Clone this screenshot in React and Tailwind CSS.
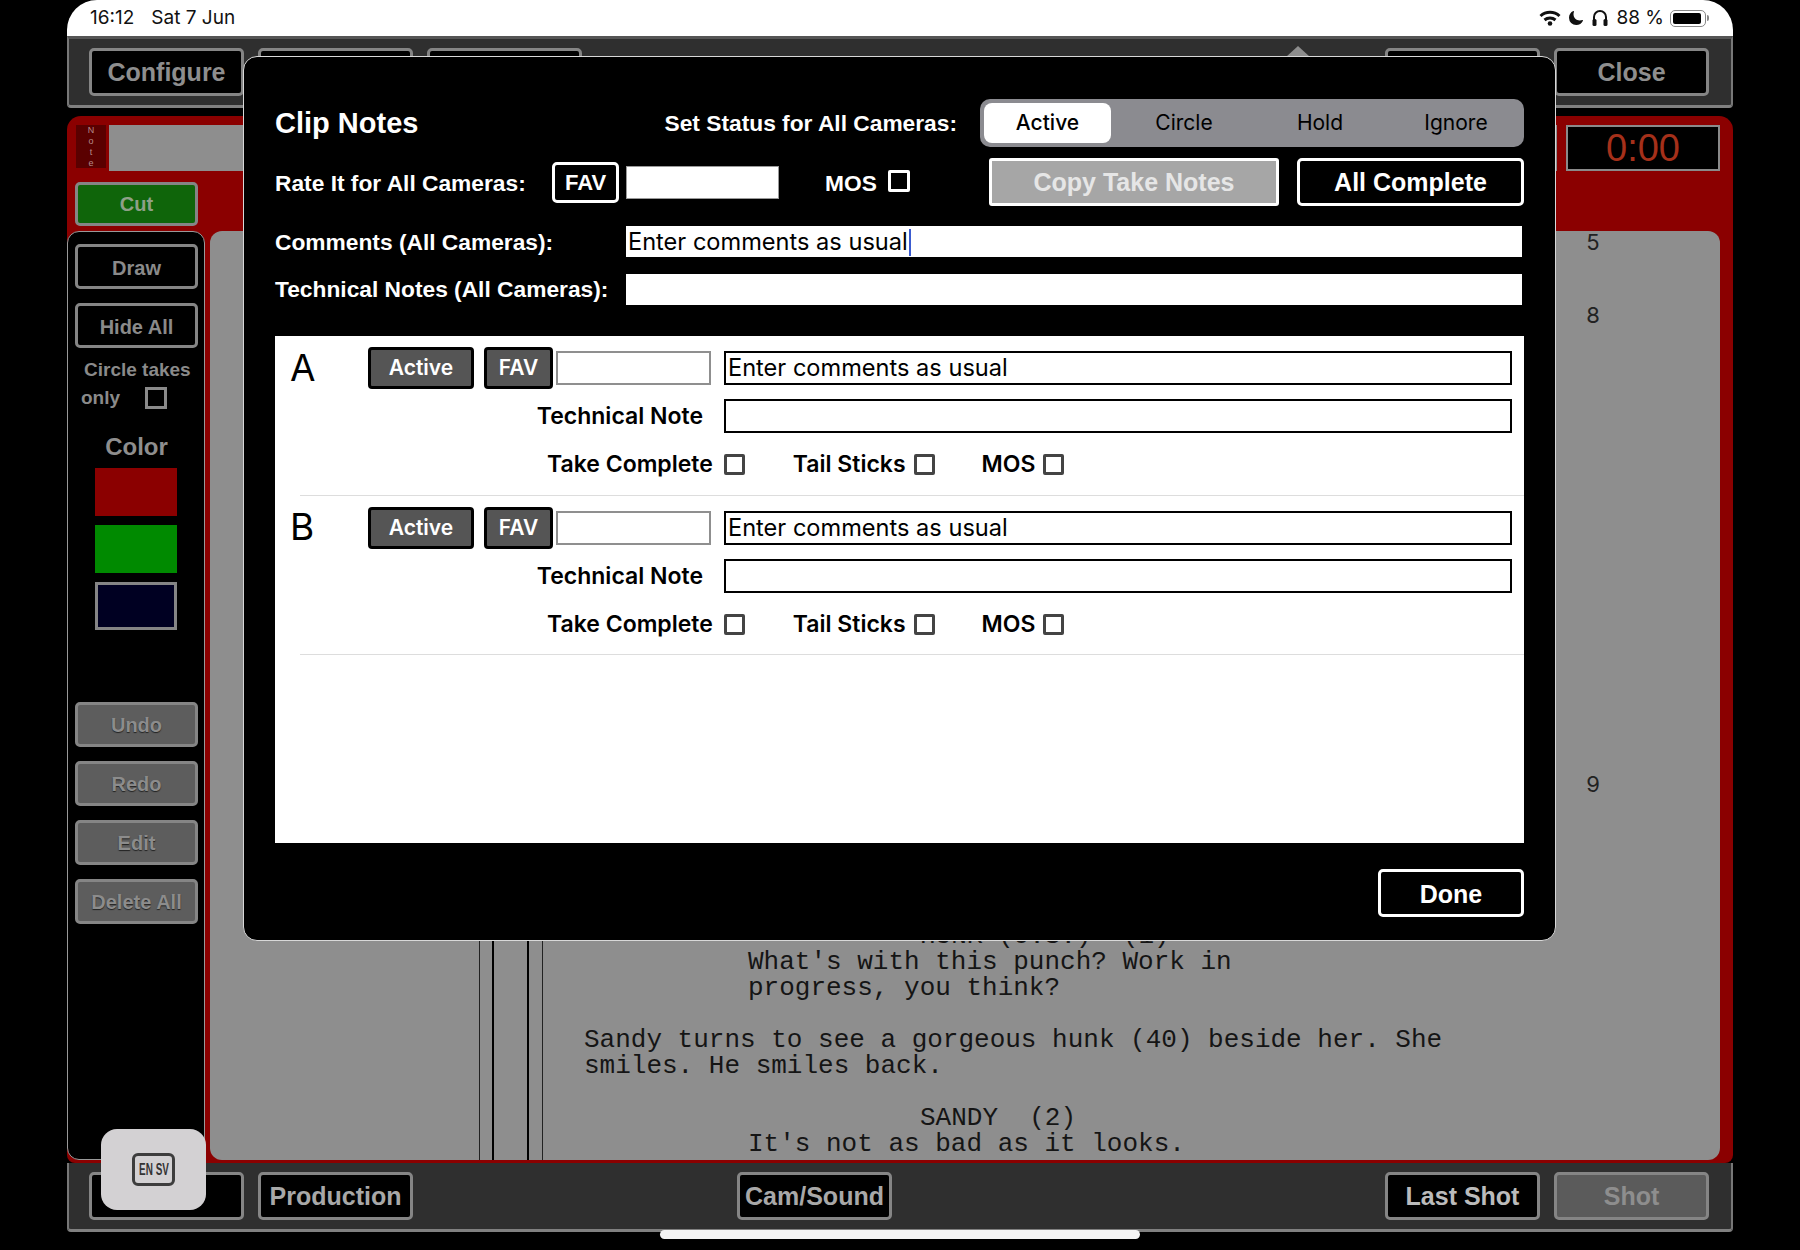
import React from "react";
import { IoMoon } from "react-icons/io5";

const SANS = "font-['Liberation_Sans',Arial,sans-serif]";
const UI = "font-['Inter','Noto_Sans',sans-serif]";

// gray framed buttons of the app behind the dialog
const AppButton = ({ label, className = "" }) => (
  <div className={`flex items-center justify-center h-12 w-[155px] pt-[2px] rounded-[5px] border-[3px] border-[#858585] bg-black text-[25px] font-bold ${SANS} ${className}`}>
    {label}
  </div>
);

const SideButton = ({ label, dim, className = "" }) => (
  <div
    className={`flex items-center justify-center h-[45px] w-[123px] rounded-[5px] border-[3px] border-[#858585] text-[20px] font-bold ${SANS} ${
      dim ? "bg-[#5d5d5d] text-[#8c8c8c] [text-shadow:0_1px_1px_#222]" : "bg-black text-[#8a8a8a]"
    } ${className}`}
  >
    {label}
  </div>
);

const Check = ({ className = "" }) => (
  <div className={`w-[21px] h-[21px] rounded-[2px] border-[3px] border-[#444] bg-white ${className}`} />
);

const DarkButton = ({ label, width }) => (
  <div className={`flex items-center justify-center h-[42px] ${width} rounded-[4px] border-[3px] border-black bg-[#555555] text-white text-[21px] font-semibold ${UI}`}>
    {label}
  </div>
);

const Option = ({ label, boxClass = "" }) => (
  <>
    <span className="text-[23px] font-semibold leading-none text-black">{label}</span>
    <Check className={boxClass} />
  </>
);

const CameraRow = ({ name }) => (
  <div className={`pt-[11px] pb-[19px] ${UI}`}>
    <div className="flex items-center">
      <div className="w-[78px] -mt-[2px] ml-[15px] text-[37px] font-normal leading-none text-black">{name}</div>
      <DarkButton label="Active" width="w-[106px]" />
      <div className="ml-[10px]">
        <DarkButton label="FAV" width="w-[69px]" />
      </div>
      <input readOnly className="ml-[3px] w-[155px] h-[34px] border-2 border-[#8f8f8f] bg-white" />
      <input
        readOnly
        value="Enter comments as usual"
        className="ml-[13px] w-[788px] h-[34px] border-2 border-black bg-white px-[2px] text-[23.6px] text-black outline-none"
      />
    </div>
    <div className="flex items-center mt-[10px]">
      <div className="w-[428px] text-right text-[23px] font-semibold text-black">Technical Note</div>
      <input readOnly className="ml-[21px] w-[788px] h-[34px] border-2 border-black bg-white" />
    </div>
    <div className="flex items-center h-[22px] mt-5 pl-[272px]">
      <Option label="Take Complete" boxClass="ml-[11px]" />
      <div className="w-[48px]" />
      <Option label="Tail Sticks" boxClass="ml-[8px]" />
      <div className="w-[47px]" />
      <Option label="MOS" boxClass="ml-[8px]" />
    </div>
  </div>
);

const ClipNotes = () => (
  <div className={`absolute left-[243px] top-[56px] w-[1313px] h-[885px] rounded-[14px] border border-[#d8d8d8] bg-black pt-[42px] pl-[31px] pr-[31px] text-white ${SANS}`}>
    {/* title and status */}
    <div className="flex items-center justify-between h-12">
      <div className="pt-[1px] text-[29px] font-bold">Clip Notes</div>
      <div className="flex items-center">
        <span className="text-[22.75px] font-bold">Set Status for All Cameras:</span>
        <div className={`ml-[23px] w-[544px] h-12 grid grid-cols-4 items-center rounded-[10px] bg-[#8b8b90] text-[21px] text-black ${UI}`}>
          <div className="ml-1 w-[127px] h-10 flex items-center justify-center rounded-[8px] bg-white font-medium">Active</div>
          <div className="text-center">Circle</div>
          <div className="text-center">Hold</div>
          <div className="text-center">Ignore</div>
        </div>
      </div>
    </div>

    {/* rating row */}
    <div className="flex items-center h-12 mt-[11px]">
      <div className="w-[277px] pt-[2px] text-[22.75px] font-bold">Rate It for All Cameras:</div>
      <div className="flex items-center justify-center w-[67px] h-[41px] pt-[1px] rounded-[5px] border-[3px] border-white text-[22px] font-bold">FAV</div>
      <div className="ml-[7px] w-[153px] h-[33px] bg-white border border-[#999]" />
      <div className="ml-[46px] pt-[2px] text-[22.75px] font-bold">MOS</div>
      <div className="ml-[11px] -mt-[3px] w-[22px] h-[22px] rounded-[2px] border-[3px] border-white" />
      <div className="ml-auto w-[290px] h-12 pt-[2px] flex items-center justify-center rounded-[3px] border-[3px] border-white bg-[#a6a6a6] text-[25px] font-bold text-[#e6e6e6]">
        Copy Take Notes
      </div>
      <div className="ml-[18px] w-[227px] h-12 pt-[1px] flex items-center justify-center rounded-[5px] border-[3px] border-white text-[25px] font-bold">
        All Complete
      </div>
    </div>

    {/* comments for all cameras */}
    <div className="flex items-center mt-5 h-[31px]">
      <div className="w-[351px] pt-[1px] text-[22.75px] font-bold">Comments (All Cameras):</div>
      <div className={`flex-1 mr-[2px] h-[31px] pt-[1px] flex items-center bg-white px-[2px] text-[23.6px] text-black ${UI}`}>
        Enter comments as usual
        <span className="ml-[1px] w-[2px] h-[27px] bg-[#3a5bd0]" />
      </div>
    </div>
    <div className="flex items-center mt-[17px] h-[31px]">
      <div className="w-[351px] text-[22.75px] font-bold">Technical Notes (All Cameras):</div>
      <div className="flex-1 mr-[2px] h-[31px] bg-white" />
    </div>

    {/* per camera list */}
    <div className="mt-[31px] h-[507px] bg-white">
      <CameraRow name="A" />
      <div className="ml-[25px] h-px bg-[#dddddd]" />
      <CameraRow name="B" />
      <div className="ml-[25px] h-px bg-[#dddddd]" />
    </div>

    <div className="flex justify-end mt-[26px]">
      <div className="w-[146px] h-12 pt-[3px] flex items-center justify-center rounded-[5px] border-[3px] border-white text-[25px] font-bold">Done</div>
    </div>
  </div>
);

const SCRIPT_LINES = [
  ["HUNK (O.S.)  (1)", "pl-[336px]"],
  ["What's with this punch? Work in", "pl-[164px]"],
  ["progress, you think?", "pl-[164px]"],
  ["\u00a0", ""],
  ["Sandy turns to see a gorgeous hunk (40) beside her. She", ""],
  ["smiles. He smiles back.", ""],
  ["\u00a0", ""],
  ["SANDY  (2)", "pl-[336px]"],
  ["It's not as bad as it looks.", "pl-[164px]"],
];

const Script = () => (
  <div className="flex-1 flex rounded-[12px] bg-[#8e8e8e]">
    {/* revision lines */}
    <div className="flex ml-[269px] w-[105px] shrink-0">
      <div className="w-px bg-[#222]" />
      <div className="ml-[12px] w-[2px] bg-black" />
      <div className="ml-[33px] w-[2px] bg-black" />
      <div className="ml-[13px] w-px bg-[#222]" />
    </div>
    <div className="pt-[692px] text-[26px] leading-[26px] whitespace-pre text-[#151515] font-['Liberation_Mono','Courier_New',monospace]">
      {SCRIPT_LINES.map(([text, indent], i) => (
        <div key={i} className={indent}>{text}</div>
      ))}
    </div>
    <div className={`ml-auto mr-[120px] -mt-[2px] flex flex-col text-[22px] leading-[26px] text-[#222] ${UI}`}>
      <span>5</span>
      <span className="mt-[47px]">8</span>
      <span className="mt-[443px]">9</span>
    </div>
  </div>
);

const LeftPanel = () => (
  <div className="w-[138px] shrink-0 rounded-[12px] border border-[#999] bg-black pt-3 pl-[7px]">
    <SideButton label="Draw" className="pt-[3px]" />
    <SideButton label="Hide All" className="mt-[14px] pt-[2px]" />
    <div className={`mt-[12px] ml-[9px] text-[19px] font-bold leading-none text-[#8a8a8a] whitespace-nowrap ${SANS}`}>Circle takes</div>
    <div className={`flex items-center mt-[5px] ml-[6px] text-[19px] font-bold text-[#8a8a8a] ${SANS}`}>
      only
      <div className="ml-[25px] w-[22px] h-[22px] border-[3px] border-[#8a8a8a]" />
    </div>
    <div className={`mt-[22px] w-[123px] text-center text-[24px] font-bold leading-none text-[#8e8e8e] ${SANS}`}>Color</div>
    <div className="mt-[9px] ml-[20px] w-[82px] h-12 bg-[#8b0000]" />
    <div className="mt-[9px] ml-[20px] w-[82px] h-12 bg-[#008a00]" />
    <div className="mt-[9px] ml-[20px] w-[82px] h-12 border-[3px] border-[#858585] bg-[#000022]" />
    <SideButton dim label="Undo" className="mt-[72px] pt-[2px]" />
    <SideButton dim label="Redo" className="mt-[14px] pt-[2px]" />
    <SideButton dim label="Edit" className="mt-[14px] pt-[2px]" />
    <SideButton dim label="Delete All" className="mt-[14px] pt-[2px]" />
  </div>
);

export default function App() {
  return (
    <div className="relative w-[1800px] h-[1250px] overflow-hidden bg-black">
      <div className="flex flex-col h-full mx-[67px] pb-[18px]">
        {/* ios status bar */}
        <div className={`flex items-center justify-between h-9 shrink-0 rounded-t-[30px] bg-white pl-[23px] pr-[24px] text-[19px] text-[#111] ${UI}`}>
          <div className="flex gap-[17px]">
            <span>16:12</span>
            <span>Sat 7 Jun</span>
          </div>
          <div className="flex items-center">
            <svg viewBox="0 0 22 16" className="w-[22px] h-[16px]" fill="none" stroke="#111" strokeWidth="3">
              <path d="M1.5 6a14 14 0 0 1 19 0" />
              <path d="M5.5 10a8.5 8.5 0 0 1 11 0" />
              <circle cx="11" cy="13.5" r="2.3" fill="#111" stroke="none" />
            </svg>
            <IoMoon className="ml-[7px] w-[16px] h-[16px]" />
            <svg viewBox="0 0 16 18" className="ml-[8px] w-[16px] h-[18px]" fill="none" stroke="#111" strokeWidth="2">
              <path d="M2 12V8a6 6 0 0 1 12 0v4" />
              <rect x="0.5" y="10" width="4" height="7" rx="1.5" fill="#111" stroke="none" />
              <rect x="11.5" y="10" width="4" height="7" rx="1.5" fill="#111" stroke="none" />
            </svg>
            <span className="ml-[8px]">88 %</span>
            <div className="ml-[6px] w-[36px] h-[17px] rounded-[5px] border border-[#888] p-[2px]">
              <div className="w-[28px] h-full rounded-[2px] bg-black" />
            </div>
            <div className="ml-[1px] w-[2px] h-[6px] rounded-r-sm bg-[#888]" />
          </div>
        </div>

        {/* top toolbar */}
        <div className="flex justify-between h-[72px] shrink-0 border-x-2 border-t-[3px] border-b-[3px] border-x-[#777] border-t-[#555] border-b-[#808080] rounded-b-[4px] bg-[#2f2f2f] pt-[9px] pl-[20px] pr-[22px]">
          <div className="flex gap-[14px]">
            <AppButton label="Configure" className="text-[#8e8e8e]" />
            <AppButton label="" />
            <AppButton label="" />
          </div>
          <div className="flex gap-[14px]">
            <AppButton label="" />
            <AppButton label="Close" className="text-[#8e8e8e]" />
          </div>
        </div>

        {/* red work area */}
        <div className="flex-1 mt-2 flex flex-col rounded-t-[14px] rounded-b-[8px] bg-[#8b0000] pt-[9px] pb-[3px] min-h-0">
          <div className="flex h-[46px] shrink-0 pl-[9px] pr-[13px]">
            <div className={`w-[30px] h-[43px] flex flex-col items-center justify-center bg-[#5a0000] text-[9px] leading-[11px] text-[#b58a8a] ${SANS}`}>
              <span>N</span>
              <span>o</span>
              <span>t</span>
              <span>e</span>
            </div>
            <div className="flex-1 ml-[3px] bg-[#8e8e8e]" />
            <div className={`ml-[9px] w-[154px] flex items-center justify-center border-2 border-[#8a8a8a] bg-black text-[38px] text-[#a5301a] ${SANS}`}>0:00</div>
          </div>
          <div className="shrink-0 mt-[11px] ml-2">
            <SideButton label="Cut" className="h-11! bg-[#0f650a]! text-[#8fa088]! border-[#8f9a8a]" />
          </div>
          <div className="flex-1 flex mt-[5px] pr-[13px] gap-[5px] min-h-0">
            <LeftPanel />
            <Script />
          </div>
        </div>

        {/* bottom toolbar */}
        <div className="flex items-center h-[69px] shrink-0 border-x-2 border-b-[3px] border-x-[#777] border-b-[#808080] rounded-b-[4px] bg-[#2f2f2f] pl-[20px] pr-[22px]">
          <div className="flex gap-[14px]">
            <AppButton label="" />
            <AppButton label="Production" className="text-[#a8a8a8]" />
          </div>
          <AppButton label="Cam/Sound" className="ml-[324px] text-[#a8a8a8]" />
          <div className="flex gap-[14px] ml-auto">
            <AppButton label="Last Shot" className="text-[#bbbbbb]" />
            <AppButton label="Shot" className="bg-[#5b5b5b]! text-[#8e8e8e]" />
          </div>
        </div>
      </div>

      {/* popover arrow */}
      <div className="absolute left-[1286px] top-[46px] w-0 h-0 border-x-[12px] border-x-transparent border-b-[11px] border-b-[#8e8e8e]" />

      <ClipNotes />

      {/* keyboard language bubble */}
      <div className="absolute left-[101px] top-[1129px] w-[105px] h-[81px] flex items-center justify-center rounded-[16px] bg-[#d3d1d3]">
        <div className={`w-[43px] h-[33px] flex items-center justify-center rounded-[6px] border-[3px] border-[#3d3d3d] text-[#333] text-[16px] font-bold ${SANS}`}>
          <span className="scale-x-[0.62] whitespace-nowrap">EN SV</span>
        </div>
      </div>

      {/* home indicator */}
      <div className="absolute left-[660px] top-[1230px] w-[480px] h-[9px] rounded-full bg-[#f4f4f4]" />
    </div>
  );
}
